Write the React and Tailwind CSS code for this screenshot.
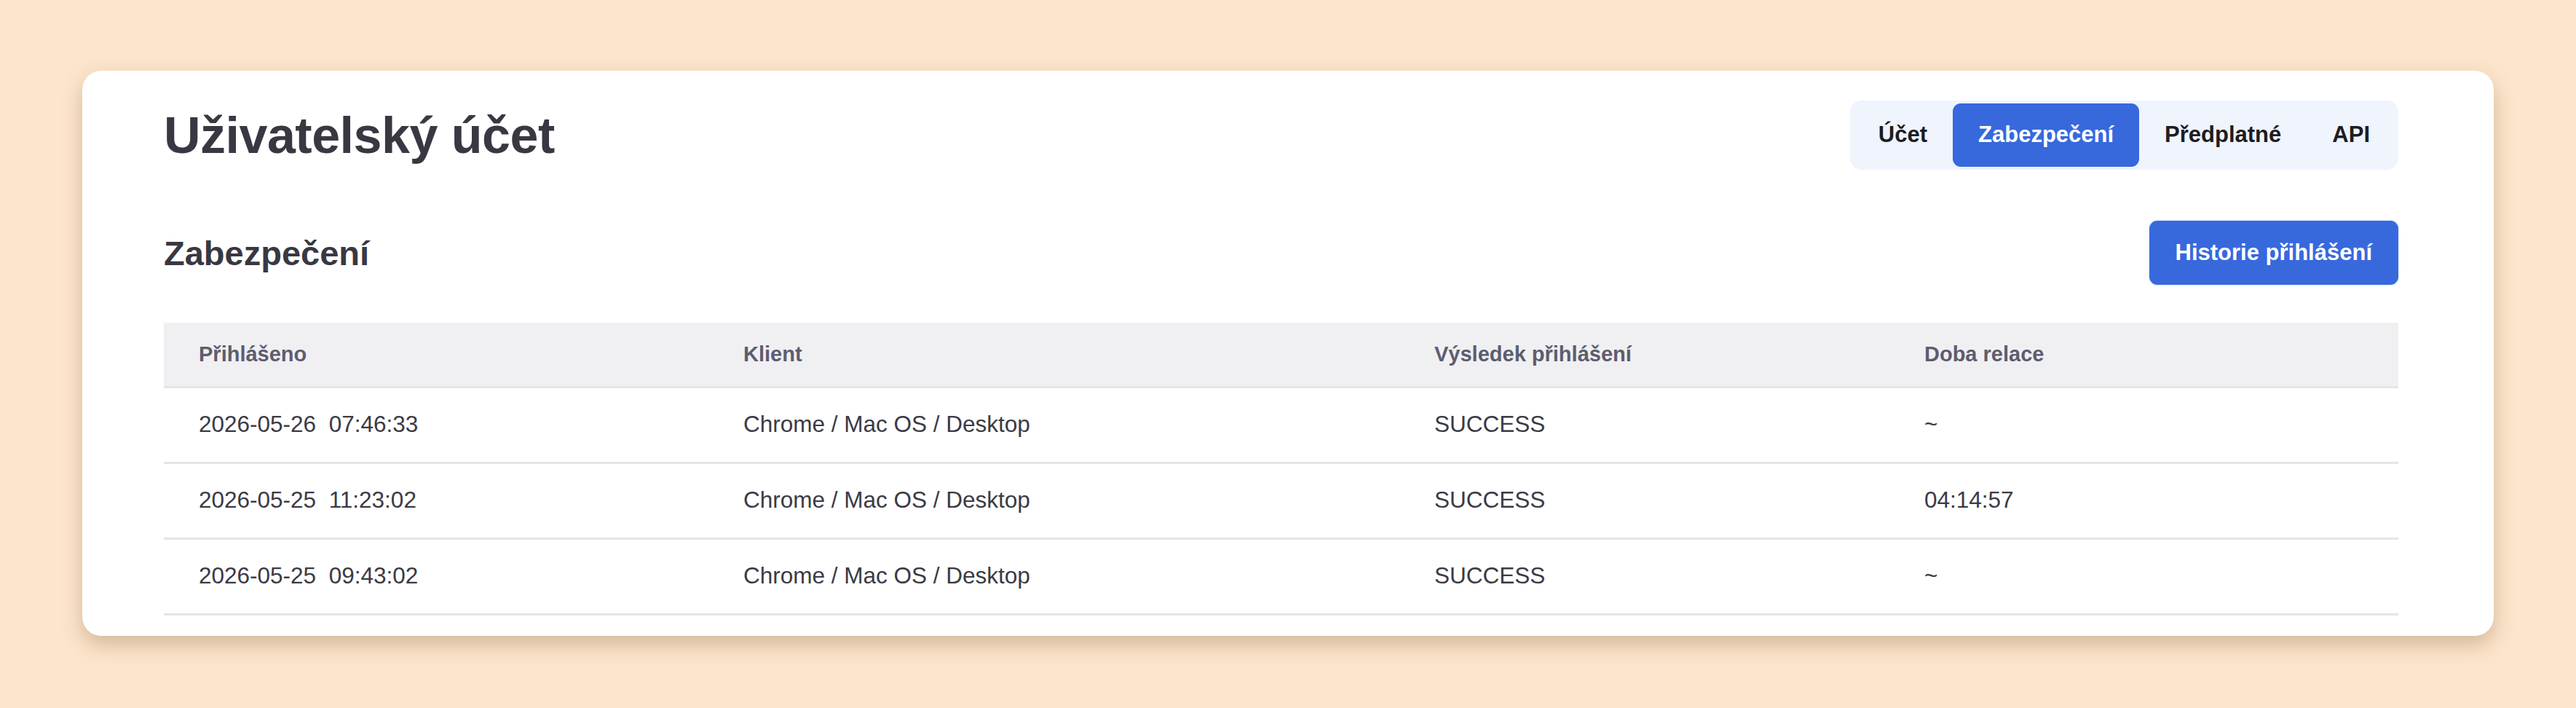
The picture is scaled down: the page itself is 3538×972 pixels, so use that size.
import React from "react";

const FONT = { fontFamily: '"Liberation Sans", Arial, sans-serif' };

const TABS = ["Účet", "Zabezpečení", "Předplatné", "API"];

const COLUMNS = [
  { label: "Přihlášeno", width: "w-[748px]" },
  { label: "Klient", width: "w-[949px]" },
  { label: "Výsledek přihlášení", width: "w-[673px]" },
  { label: "Doba relace", width: "" },
];

const LOGINS = [
  { at: "2026-05-26\u00a0\u00a007:46:33", client: "Chrome / Mac OS / Desktop", result: "SUCCESS", duration: "~" },
  { at: "2026-05-25\u00a0\u00a011:23:02", client: "Chrome / Mac OS / Desktop", result: "SUCCESS", duration: "04:14:57" },
  { at: "2026-05-25\u00a0\u00a009:43:02", client: "Chrome / Mac OS / Desktop", result: "SUCCESS", duration: "~" },
];

function Tabs({ active }) {
  return (
    <div className="flex items-center p-[4px] rounded-[16px] bg-[#eff4fd]">
      {TABS.map(t => (
        <button
          key={t}
          className={`h-[87px] px-[35px] rounded-[11px] text-[31px] font-bold ${
            t === active ? "bg-[#3769dc] text-white" : "text-[#1d1d22]"
          }`}
        >
          {t}
        </button>
      ))}
    </div>
  );
}

export default function App() {
  return (
    <div style={FONT} className="h-screen bg-[#fce5cc] px-[113px] pt-[97px]">
      <div className="bg-white rounded-[26px] shadow-[0_12px_28px_rgba(140,100,60,0.35)] pl-[112px] pr-[131px] pt-[41px] pb-[28px]">
        {/* Page header with section tabs */}
        <div className="flex items-center justify-between">
          <h1 className="text-[70px] leading-none font-bold text-[#393842] tracking-[-0.5px]">Uživatelský účet</h1>
          <Tabs active="Zabezpečení" />
        </div>

        {/* Section title + action */}
        <div className="flex items-center justify-between mt-[70px]">
          <h2 className="text-[47px] leading-none font-bold text-[#393842]">Zabezpečení</h2>
          <button className="h-[88px] px-[36px] rounded-[11px] bg-[#3769dc] text-white text-[31px] font-bold ring-2 ring-[#eef3fd]">
            Historie přihlášení
          </button>
        </div>

        {/* Login history */}
        <table className="w-full mt-[52px] border-collapse text-left">
          <thead>
            <tr className="bg-[#f0f0f3] border-b-[3px] border-[#e4e4ea]">
              {COLUMNS.map(c => (
                <th key={c.label} className={`${c.width} h-[88px] px-[48px] text-[29px] font-bold text-[#5d5d6e]`}>
                  {c.label}
                </th>
              ))}
            </tr>
          </thead>
          <tbody>
            {LOGINS.map((r, i) => (
              <tr key={i} className="border-b-[3px] border-[#e4e4ea] text-[31.5px] text-[#3b3a45]">
                <td className="h-[104px] px-[48px] whitespace-pre">{r.at}</td>
                <td className="px-[48px]">{r.client}</td>
                <td className="px-[48px]">{r.result}</td>
                <td className="px-[48px]">{r.duration}</td>
              </tr>
            ))}
          </tbody>
        </table>
      </div>
    </div>
  );
}
